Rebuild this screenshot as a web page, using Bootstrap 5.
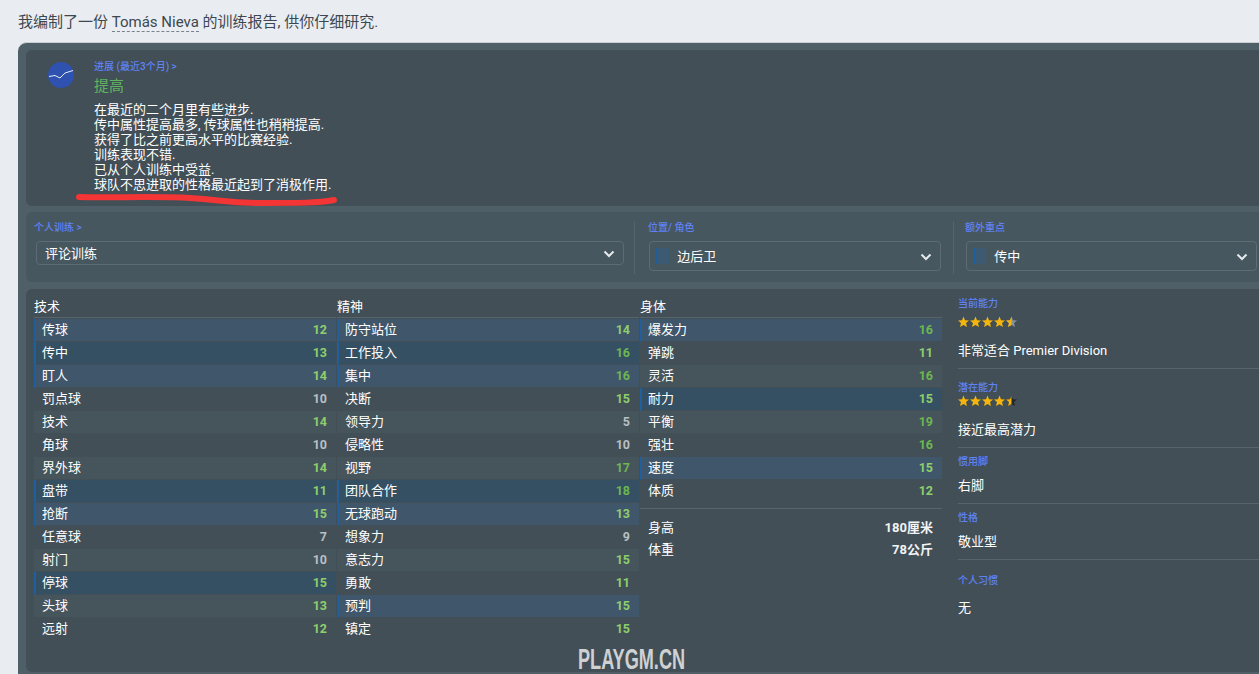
<!DOCTYPE html>
<html lang="zh-CN">
<head>
  <meta charset="UTF-8"/>
  <meta name="viewport" content="width=device-width, initial-scale=1.0"/>
  <title>训练报告</title>
  <link href="https://cdn.jsdelivr.net/npm/bootstrap@5.3.0/dist/css/bootstrap.min.css" rel="stylesheet"/>
  <style>
    html, body { height: 674px; overflow: hidden; }
    body {
      background: #e9edf1;
      color: #fff;
      font-family: Roboto, "Noto Sans CJK SC", sans-serif;
      font-size: 13px;
    }
    .intro {
      height: 42px;
      padding: 13px 0 0 18px;
      color: #3c4750;
      font-size: 15px;
      line-height: 18px;
    }
    .intro-name { border-bottom: 1px dashed #77828b; }
    .frame {
      position: relative;
      width: 1300px;
      margin-left: 18px;
      padding: 7px 8px;
      background: #4f5f68;
      border-top: 1px solid #c9cfd3;
      border-radius: 9px 0 0 0;
    }
    .panel-box { background: #424f57; border-radius: 6px; }
    .progress-box { height: 156px; margin-bottom: 6px; }
    .trend-icon { width: 68px; padding: 11px 0 0 21px; }
    .kicker { color: #5f82f5; font-size: 10px; font-weight: 500; line-height: 14px; }
    .progress-head { padding-top: 10px; }
    .progress-title { color: #5fb45f; font-size: 15px; line-height: 22px; margin-top: 1px; }
    .progress-text { font-size: 13px; line-height: 15.1px; margin-top: 5px; }
    .controls-box {
      height: 70px;
      margin-bottom: 7px;
      padding: 9px 0 8px 8px;
      background: #47575f;
    }
    .ctrl-first { width: 600px; }
    .ctrl-second { width: 319px; padding-left: 13px; border-left: 1px solid #55646c; }
    .ctrl-third { width: 304px; padding-left: 11px; border-left: 1px solid #55646c; }
    .fake-select {
      display: flex;
      align-items: center;
      justify-content: space-between;
      margin: 6px 0 0 1px;
      padding: 1px 8px 0;
      border: 1px solid #5d6c74;
      border-radius: 4px;
      font-size: 13px;
    }
    .ctrl-first .fake-select { height: 24px; width: 588px; margin-left: 2px; }
    .ctrl-second .fake-select, .ctrl-third .fake-select { height: 30px; width: 292px; padding-left: 6px; }
    .ctrl-third .fake-select { width: 291px; }
    .role-chip {
      display: inline-block;
      width: 13px;
      height: 16px;
      margin-right: 5px;
      vertical-align: -3px;
      background: #3c5a72;
      border-left: 2px solid #1f5f9e;
    }
    .attrs-box { height: 383px; padding: 7px 0 0 8px; }
    .attr-col { width: 302px; margin-right: 1px; }
    .attr-head {
      height: 22px;
      margin-bottom: 1px;
      font-size: 13px;
      line-height: 21px;
      border-bottom: 1px solid #56646c;
    }
    .attr-row {
      display: flex;
      justify-content: space-between;
      height: 23px;
      padding: 0 9px 0 8px;
      line-height: 22px;
      border-bottom: 1px solid #424f57;
    }
    .attr-row:nth-child(odd) { background: #46545c; }
    .attr-row.picked { background: #355063; border-left: 2px solid #1f5f9e; padding-left: 6px; }
    .attr-row.picked:nth-child(odd) { background: #40566b; }
    .attr-val { font-weight: 700; font-size: 12.5px; }
    .val-low { color: #b9bfc3; }
    .val-mid { color: #8fce6c; }
    .val-high { color: #6db650; }
    .body-stats { margin-top: 5px; padding-top: 8px; border-top: 1px solid #56646c; }
    .body-stats .attr-row { background: transparent; border: 0; height: 22px; }
    .body-stats .attr-val { font-size: 13px; color: #f2f4f5; }
    .info-col { width: 320px; margin-left: 15px; padding-top: 1px; }
    .info-item { border-bottom: 1px solid #56646c; }
    .info-item:last-child { border-bottom: 0; }
    .info-first { height: 72px; }
    .info-second { height: 79px; padding-top: 12px; }
    .info-two { height: 56px; padding-top: 7px; }
    .info-last { padding-top: 14px; }
    .info-value { line-height: 18px; }
    .info-first svg { margin-top: 5px; }
    .info-first .info-value, .info-second .info-value { margin-top: 13px; }
    .info-two .info-value { margin-top: 8px; }
    .info-last .info-value { margin-top: 11px; }
    .watermark {
      position: absolute;
      left: 560px;
      top: 603px;
      color: #cfd1d2;
      font-family: "Liberation Sans", sans-serif;
      font-size: 29px;
      font-weight: 700;
      line-height: 26px;
      transform: scaleX(.625);
      transform-origin: left center;
    }
    .red-stroke { position: absolute; left: 50px; top: 145px; }
  </style>
</head>
<body>
  <div class="intro">我编制了一份 <span class="intro-name">Tomás Nieva</span> 的训练报告, 供你仔细研究.</div>

  <div class="frame">
    <!-- Progress -->
    <div class="panel-box progress-box d-flex">
      <div class="trend-icon">
        <svg width="28" height="28" viewBox="0 0 28 28">
          <circle cx="14" cy="14" r="13" fill="#2f52b0"/>
          <polyline points="2,15.5 8,14.5 13,17 18,12 26,9.5" fill="none" stroke="#e8ecf8" stroke-width="1"/>
        </svg>
      </div>
      <div class="progress-head">
        <div class="kicker">进展 (最近3个月) &gt;</div>
        <div class="progress-title">提高</div>
        <div class="progress-text">
          在最近的二个月里有些进步.<br/>
          传中属性提高最多, 传球属性也稍稍提高.<br/>
          获得了比之前更高水平的比赛经验.<br/>
          训练表现不错.<br/>
          已从个人训练中受益.<br/>
          球队不思进取的性格最近起到了消极作用.
        </div>
      </div>
    </div>

    <!-- Training selects -->
    <div class="panel-box controls-box d-flex">
      <div class="ctrl-first">
        <div class="kicker">个人训练 &gt;</div>
        <div class="fake-select"><span>评论训练</span>
          <svg width="12" height="8" viewBox="0 0 12 8"><polyline points="1.5,1.5 6,6 10.5,1.5" fill="none" stroke="#e6eaec" stroke-width="2"/></svg>
        </div>
      </div>
      <div class="ctrl-second">
        <div class="kicker">位置/ 角色</div>
        <div class="fake-select"><span><span class="role-chip"></span> 边后卫</span>
          <svg width="12" height="8" viewBox="0 0 12 8"><polyline points="1.5,1.5 6,6 10.5,1.5" fill="none" stroke="#e6eaec" stroke-width="2"/></svg>
        </div>
      </div>
      <div class="ctrl-third">
        <div class="kicker">额外重点</div>
        <div class="fake-select"><span><span class="role-chip"></span> 传中</span>
          <svg width="12" height="8" viewBox="0 0 12 8"><polyline points="1.5,1.5 6,6 10.5,1.5" fill="none" stroke="#e6eaec" stroke-width="2"/></svg>
        </div>
      </div>
    </div>

    <!-- Attributes -->
    <div class="panel-box attrs-box d-flex">
      <div class="attr-col">
        <div class="attr-head">技术</div>
        <div id="colTech"></div>
      </div>
      <div class="attr-col">
        <div class="attr-head">精神</div>
        <div id="colMental"></div>
      </div>
      <div class="attr-col">
        <div class="attr-head">身体</div>
        <div id="colPhysical"></div>
        <div class="body-stats">
          <div class="attr-row"><span>身高</span><span class="attr-val">180厘米</span></div>
          <div class="attr-row"><span>体重</span><span class="attr-val">78公斤</span></div>
        </div>
      </div>

      <div class="info-col">
        <div class="info-item info-first">
          <div class="kicker">当前能力</div>
          <svg class="d-block" width="60" height="13" viewBox="0 0 60 13">
            <defs>
              <polygon id="starShape" points="5.5,0.5 7,4.2 11,4.5 8,7.1 9,11 5.5,8.9 2,11 3,7.1 0,4.5 4,4.2"/>
              <clipPath id="halfLeft"><rect x="0" y="0" width="5.5" height="12"/></clipPath>
            </defs>
            <use href="#starShape" fill="#f5b50a"/>
            <use href="#starShape" x="12" fill="#f5b50a"/>
            <use href="#starShape" x="24" fill="#f5b50a"/>
            <use href="#starShape" x="36" fill="#f5b50a"/>
            <use href="#starShape" x="48" fill="#8b9398"/>
            <g transform="translate(48 0)"><use href="#starShape" fill="#f5b50a" clip-path="url(#halfLeft)"/></g>
          </svg>
          <div class="info-value">非常适合 Premier Division</div>
        </div>
        <div class="info-item info-second">
          <div class="kicker">潜在能力</div>
          <svg class="d-block" width="60" height="13" viewBox="0 0 60 13">
            <use href="#starShape" fill="#f5b50a"/>
            <use href="#starShape" x="12" fill="#f5b50a"/>
            <use href="#starShape" x="24" fill="#f5b50a"/>
            <use href="#starShape" x="36" fill="#f5b50a"/>
            <use href="#starShape" x="48" fill="#23282c"/>
            <g transform="translate(48 0)"><use href="#starShape" fill="#f5b50a" clip-path="url(#halfLeft)"/></g>
          </svg>
          <div class="info-value">接近最高潜力</div>
        </div>
        <div class="info-item info-two">
          <div class="kicker">惯用脚</div>
          <div class="info-value">右脚</div>
        </div>
        <div class="info-item info-two">
          <div class="kicker">性格</div>
          <div class="info-value">敬业型</div>
        </div>
        <div class="info-item info-last">
          <div class="kicker">个人习惯</div>
          <div class="info-value">无</div>
        </div>
      </div>
    </div>

    <svg class="red-stroke" width="270" height="24" viewBox="0 0 270 24">
      <path d="M11 9 C 40 10, 90 8, 122 10 S 160 15, 195 15 S 250 15, 266 12" fill="none" stroke="#f43535" stroke-width="6" stroke-linecap="round"/>
    </svg>
    <div class="watermark">PLAYGM.CN</div>
  </div>

<script>
  // [name, value, picked]
  const techAttrs = [
    ["传球", 12, 1], ["传中", 13, 1], ["盯人", 14, 1], ["罚点球", 10], ["技术", 14], ["角球", 10], ["界外球", 14],
    ["盘带", 11, 1], ["抢断", 15, 1], ["任意球", 7], ["射门", 10], ["停球", 15, 1], ["头球", 13], ["远射", 12]
  ];
  const mentalAttrs = [
    ["防守站位", 14, 1], ["工作投入", 16, 1], ["集中", 16, 1], ["决断", 15], ["领导力", 5], ["侵略性", 10], ["视野", 17],
    ["团队合作", 18, 1], ["无球跑动", 13, 1], ["想象力", 9], ["意志力", 15], ["勇敢", 11], ["预判", 15, 1], ["镇定", 15]
  ];
  const physicalAttrs = [
    ["爆发力", 16, 1], ["弹跳", 11], ["灵活", 16], ["耐力", 15, 1], ["平衡", 19], ["强壮", 16], ["速度", 15, 1], ["体质", 12]
  ];

  function valClass(val) {
    if (val <= 10) return "val-low";
    if (val >= 16) return "val-high";
    return "val-mid";
  }

  function renderCol(id, attrs) {
    document.getElementById(id).innerHTML = attrs.map(a => `
      <div class="attr-row ${a[2] ? "picked" : ""}">
        <span>${a[0]}</span><span class="attr-val ${valClass(a[1])}">${a[1]}</span>
      </div>
    `).join("");
  }

  renderCol("colTech", techAttrs);
  renderCol("colMental", mentalAttrs);
  renderCol("colPhysical", physicalAttrs);
</script>
<script src="https://cdn.jsdelivr.net/npm/bootstrap@5.3.0/dist/js/bootstrap.bundle.min.js"></script>
</body>
</html>
